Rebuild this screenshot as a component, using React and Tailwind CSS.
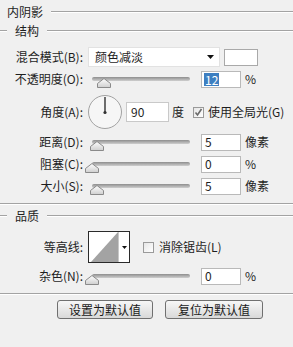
import React from "react";

const Divider = () => (
  <div className="h-[2px] w-full border-t border-[#a3a3a3] border-b border-b-white" />
);

const Label = ({ children }) => (
  <div className="w-[83px] shrink-0 text-right whitespace-nowrap">{children}</div>
);

const Slider = ({ value }) => (
  <div className="relative ml-[9px] h-[4px] w-[98px] rounded-full bg-gradient-to-b from-[#8e8e8e] to-[#cfcfcf]">
    <svg
      width="14"
      height="10"
      viewBox="0 0 14 10"
      className="absolute top-[1px]"
      style={{ left: `${value * 0.98 - 7}px` }}
    >
      <defs>
        <linearGradient id="thumb" x1="0" y1="0" x2="0" y2="1">
          <stop offset="0" stopColor="#ffffff" />
          <stop offset="1" stopColor="#cfcfcf" />
        </linearGradient>
      </defs>
      <polygon points="7,0.5 13.5,5.5 13.5,9.5 0.5,9.5 0.5,5.5" fill="url(#thumb)" stroke="#8a8a8a" />
    </svg>
  </div>
);

const NumBox = ({ value, selected }) => (
  <div className="flex h-[17px] w-[40px] items-center border border-[#b9b9b9] bg-white pl-[2px]">
    {selected ? (
      <span className="bg-[#3d7fc1] px-[1px] leading-[13px] text-white">{value}</span>
    ) : (
      <span className="pl-[1px]">{value}</span>
    )}
  </div>
);

const SliderRow = ({ label, value, unit, selected }) => (
  <div className="flex h-[22px] items-center">
    <Label>{label}</Label>
    <Slider value={value} />
    <div className="ml-[11px]">
      <NumBox value={value} selected={selected} />
    </div>
    <span className="ml-[4px]">{unit}</span>
  </div>
);

const SectionHead = ({ children }) => (
  <div className="flex h-[14px] items-center">
    <div className="w-[7px]">
      <Divider />
    </div>
    <span className="px-[8px] leading-none">{children}</span>
    <div className="flex-1">
      <Divider />
    </div>
  </div>
);

const Checkbox = ({ checked }) => (
  <div className="flex h-[11px] w-[11px] items-center justify-center border border-[#9a9a9a] bg-gradient-to-br from-[#e6e6e6] to-white">
    {checked && (
      <svg width="9" height="9" viewBox="0 0 9 9">
        <path d="M1.5 4.5 L3.5 7 L7.5 1" fill="none" stroke="#6b6b6b" strokeWidth="1.6" />
      </svg>
    )}
  </div>
);

const Button = ({ children }) => (
  <button className="flex h-[19px] w-full items-center justify-center rounded-[3px] border border-[#707070] bg-gradient-to-b from-[#f7f7f7] to-[#d9d9d9] text-[#1a1a1a]">
    {children}
  </button>
);

export default function App() {
  return (
    <div
      className="h-[347px] w-[293px] overflow-hidden bg-[#f0f0f0] text-[12px] text-[#1e1e1e]"
      style={{ fontFamily: '"Noto Sans CJK SC", "Noto Sans", sans-serif' }}
    >
      {/* title */}
      <div className="flex h-[24px] items-center pl-[7px]">
        <span className="leading-none">内阴影</span>
        <div className="ml-[8px] flex-1">
          <Divider />
        </div>
      </div>

      <SectionHead>结构</SectionHead>

      {/* blend mode */}
      <div className="mt-[8px] flex h-[22px] items-center">
        <Label>混合模式(B):</Label>
        <div className="ml-[5px] flex h-[20px] w-[132px] items-center justify-between border border-[#e2e2e2] bg-white pl-[6px] pr-[5px]">
          <span>颜色减淡</span>
          <svg width="7" height="4" viewBox="0 0 7 4">
            <polygon points="0,0 7,0 3.5,4" fill="#111" />
          </svg>
        </div>
        <div className="ml-[4px] h-[17px] w-[34px] border border-[#a9a9a9] bg-white" />
      </div>

      <SliderRow label="不透明度(O):" value={12} unit="%" selected />

      {/* angle */}
      <div className="mt-[4px] flex h-[36px] items-center">
        <Label>角度(A):</Label>
        <svg width="36" height="36" viewBox="0 0 36 36" className="ml-[4px]">
          <circle cx="18" cy="18" r="16.5" fill="#f6f6f6" stroke="#a2a2a2" />
          <line x1="18" y1="3" x2="18" y2="18" stroke="#333" strokeWidth="1.4" />
          <circle cx="18" cy="18.5" r="1.6" fill="#333" />
        </svg>
        <div className="ml-[3px] flex h-[20px] w-[43px] items-center border border-[#c9c9c9] bg-white pl-[4px]">
          90
        </div>
        <span className="ml-[3px]">度</span>
        <div className="ml-[9px]">
          <Checkbox checked />
        </div>
        <span className="ml-[4px]">使用全局光(G)</span>
      </div>

      <div className="mt-[1px]">
        <SliderRow label="距离(D):" value={5} unit="像素" />
        <SliderRow label="阻塞(C):" value={0} unit="%" />
        <SliderRow label="大小(S):" value={5} unit="像素" />
      </div>

      <div className="mt-[6px]">
        <Divider />
      </div>

      <div className="mt-[4px]">
        <SectionHead>品质</SectionHead>
      </div>

      {/* contour */}
      <div className="mt-[8px] flex h-[32px] items-center">
        <Label>等高线:</Label>
        <div className="ml-[5px] flex h-[32px] w-[42px] border border-[#2a2a2a] bg-white">
          <svg width="29" height="30" viewBox="0 0 29 30">
            <polygon points="29,0 29,30 2,30" fill="#a3a3a3" />
          </svg>
          <div className="flex flex-1 items-center justify-center border-l border-[#c8c8c8]">
            <svg width="5" height="3" viewBox="0 0 5 3">
              <polygon points="0,0 5,0 2.5,3" fill="#111" />
            </svg>
          </div>
        </div>
        <div className="ml-[13px]">
          <Checkbox />
        </div>
        <span className="ml-[5px]">消除锯齿(L)</span>
      </div>

      <div className="mt-[2px]">
        <SliderRow label="杂色(N):" value={0} unit="%" />
      </div>

      <div className="mt-[6px]">
        <Divider />
      </div>

      <div className="mt-[5px] flex">
        <div className="ml-[57px] w-[96px]">
          <Button>设置为默认值</Button>
        </div>
        <div className="ml-[12px] w-[98px]">
          <Button>复位为默认值</Button>
        </div>
      </div>
    </div>
  );
}
